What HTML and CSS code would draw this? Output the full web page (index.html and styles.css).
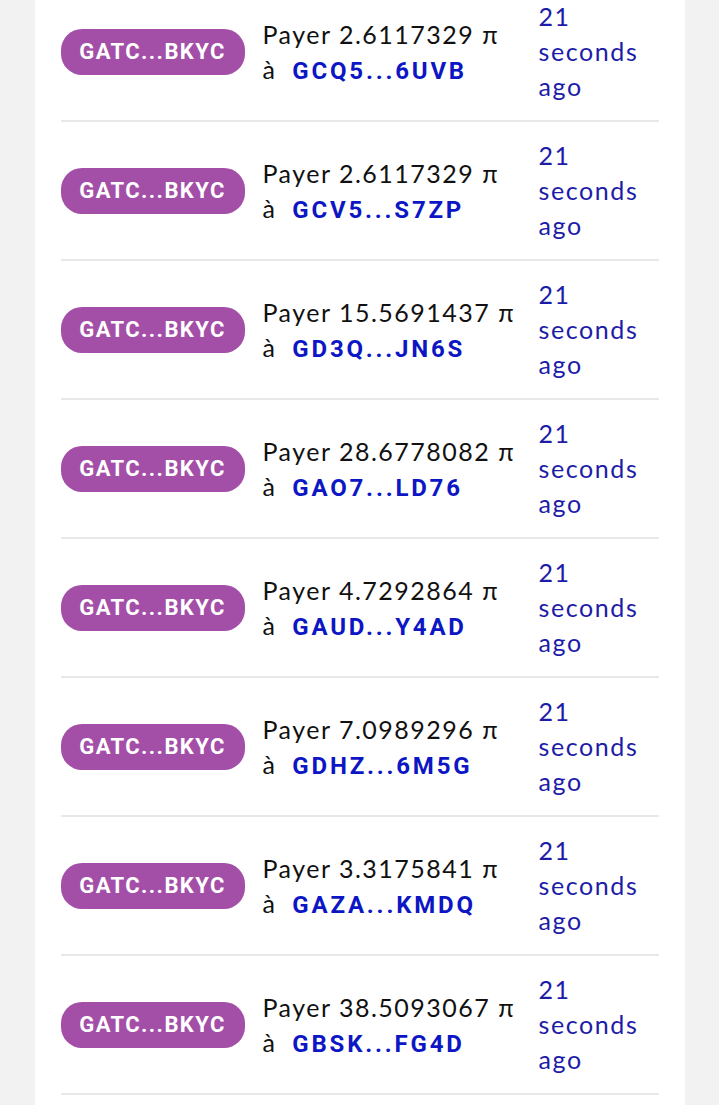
FILE: index.html
```html
<!DOCTYPE html>
<html lang="fr">
<head>
    <meta charset="UTF-8">
    <meta name="viewport" content="width=device-width, initial-scale=1.0">
    <title>Transactions</title>
    <link rel="stylesheet" href="styles.css">
</head>
<body>
    <div class="carte">
        <div class="ligne">
            <span class="badge">GATC...BKYC</span>
            <div class="op">Payer 2.6117329 π<br>à <a href="#">GCQ5...6UVB</a></div>
            <div class="temps">21 seconds ago</div>
        </div>
        <div class="ligne">
            <span class="badge">GATC...BKYC</span>
            <div class="op">Payer 2.6117329 π<br>à <a href="#">GCV5...S7ZP</a></div>
            <div class="temps">21 seconds ago</div>
        </div>
        <div class="ligne">
            <span class="badge">GATC...BKYC</span>
            <div class="op">Payer 15.5691437 π<br>à <a href="#">GD3Q...JN6S</a></div>
            <div class="temps">21 seconds ago</div>
        </div>
        <div class="ligne">
            <span class="badge">GATC...BKYC</span>
            <div class="op">Payer 28.6778082 π<br>à <a href="#">GAO7...LD76</a></div>
            <div class="temps">21 seconds ago</div>
        </div>
        <div class="ligne">
            <span class="badge">GATC...BKYC</span>
            <div class="op">Payer 4.7292864 π<br>à <a href="#">GAUD...Y4AD</a></div>
            <div class="temps">21 seconds ago</div>
        </div>
        <div class="ligne">
            <span class="badge">GATC...BKYC</span>
            <div class="op">Payer 7.0989296 π<br>à <a href="#">GDHZ...6M5G</a></div>
            <div class="temps">21 seconds ago</div>
        </div>
        <div class="ligne">
            <span class="badge">GATC...BKYC</span>
            <div class="op">Payer 3.3175841 π<br>à <a href="#">GAZA...KMDQ</a></div>
            <div class="temps">21 seconds ago</div>
        </div>
        <div class="ligne">
            <span class="badge">GATC...BKYC</span>
            <div class="op">Payer 38.5093067 π<br>à <a href="#">GBSK...FG4D</a></div>
            <div class="temps">21 seconds ago</div>
        </div>
    </div>
</body>
</html>
```

FILE: styles.css
```css
body { margin: 0; background: #f2f2f3; font-family: "Lato", "Open Sans", sans-serif; overflow: hidden; }
.carte { width: 650px; margin: -17px auto 0; padding-bottom: 30px; background: #fff; }
.ligne { display: grid; grid-template-columns: 184px 258px 120px; column-gap: 18px; align-items: center; margin: 0 26px; padding: 16px 0; border-bottom: 2px solid #e8e8e8; }
.badge { display: block; height: 46px; line-height: 46px; border-radius: 21px; background: #a34fa8; color: #fff; text-align: center; font-family: Roboto, sans-serif; font-weight: bold; font-size: 22px; letter-spacing: 1.4px; }
.op { font-size: 25px; line-height: 35px; color: #111; letter-spacing: 1.5px; padding-top: 2px; }
.op a { font-family: Roboto, sans-serif; font-weight: bold; font-size: 24px; color: #0d16c4; text-decoration: none; margin-left: 8px; letter-spacing: 2.8px; }
.temps { font-size: 25px; line-height: 35px; color: #1c1ca8; width: 110px; letter-spacing: 1.6px; }
```
